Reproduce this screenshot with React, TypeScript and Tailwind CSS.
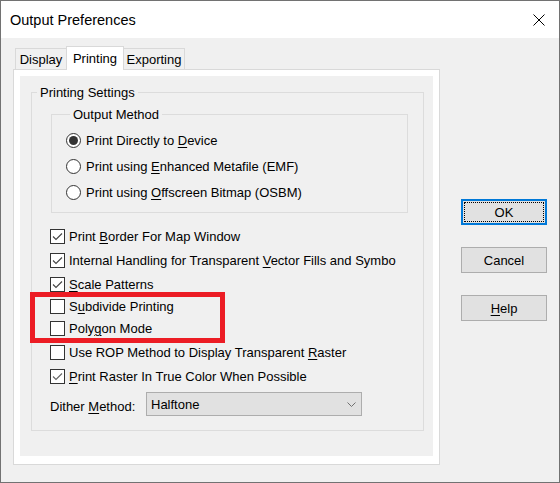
import React from "react";

const U = ({ children }: { children: React.ReactNode }) => (
  <span className="underline decoration-1 underline-offset-[2px]">{children}</span>
);

const Radio = ({ checked }: { checked?: boolean }) => (
  <svg width="15" height="15" viewBox="0 0 15 15" className="shrink-0">
    <circle cx="7.5" cy="7.5" r="7" fill="#ffffff" stroke="#333333" strokeWidth="1" />
    {checked && <circle cx="7.5" cy="7.5" r="4.5" fill="#333333" />}
  </svg>
);

const Check = ({ checked, color = "#444444" }: { checked?: boolean; color?: string }) => (
  <svg width="15" height="15" viewBox="0 0 15 15" className="shrink-0">
    <rect x="0.5" y="0.5" width="14" height="14" fill="#ffffff" stroke="#333333" strokeWidth="1" />
    {checked && (
      <polyline points="3,7.5 6,10.5 12,4.5" fill="none" stroke={color} strokeWidth="1.1" />
    )}
  </svg>
);

const RadioRow = ({ checked, children }: { checked?: boolean; children: React.ReactNode }) => (
  <div className="h-[26px] flex items-center gap-[5px] whitespace-nowrap">
    <Radio checked={checked} />
    <span>{children}</span>
  </div>
);

const CheckRow = ({
  checked,
  children,
  mt,
  color,
}: {
  checked?: boolean;
  children: React.ReactNode;
  mt: string;
  color?: string;
}) => (
  <div className={`h-[15px] flex items-center gap-[4px] whitespace-nowrap ${mt}`}>
    <Check checked={checked} color={color} />
    <span>{children}</span>
  </div>
);

export default function App() {
  return (
    <div className="relative w-[560px] h-[483px] border border-[#727272] bg-[#f0f0f0] flex flex-col overflow-hidden text-black text-[13px] leading-[15px] font-['Liberation_Sans',Arial,sans-serif]">
      {/* Title bar */}
      <div className="h-[37px] shrink-0 bg-white flex items-center justify-between pl-[9px] pr-[14px]">
        <span className="text-[14.5px] leading-[18px]">Output Preferences</span>
        <svg width="12" height="12" viewBox="0 0 12 12">
          <line x1="0.5" y1="0.5" x2="11.5" y2="11.5" stroke="#000" strokeWidth="1" />
          <line x1="11.5" y1="0.5" x2="0.5" y2="11.5" stroke="#000" strokeWidth="1" />
        </svg>
      </div>

      {/* Body */}
      <div className="flex-1 flex pl-[12px] pt-[8px]">
        <div className="w-[427px] flex flex-col">
          {/* Tabs */}
          <div className="h-[23px] flex items-end pl-[2px]">
            <div className="w-[51px] h-[21px] border-l border-t border-[#d9d9d9] flex items-center justify-center">
              Display
            </div>
            <div className="relative z-10 -mb-px w-[58px] h-[24px] pb-px border-l border-t border-r border-[#d9d9d9] bg-white flex items-center justify-center">
              Printing
            </div>
            <div className="w-[61px] h-[21px] border-t border-r border-[#d9d9d9] flex items-center justify-center">
              Exporting
            </div>
          </div>

          {/* Panel */}
          <div className="h-[396px] border border-[#d9d9d9] bg-white p-[6px]">
            <div className="h-[380px] bg-[#f0f0f0] pl-[11px] pt-[9px]">
              <fieldset className="w-[393px] border border-[#dcdcdc] pb-[14px]">
                <legend className="ml-[5px] px-[3px] leading-[15px]">Printing Settings</legend>

                <fieldset className="ml-[19px] mt-[7px] w-[357px] border border-[#dcdcdc] pl-[14px] pt-[5px] pb-[7px]">
                  <legend className="ml-[4px] px-[3px] leading-[15px]">Output Method</legend>
                  <RadioRow checked>
                    Print Directly to <U>D</U>evice
                  </RadioRow>
                  <RadioRow>
                    Print using <U>E</U>nhanced Metafile (EMF)
                  </RadioRow>
                  <RadioRow>
                    Print using <U>O</U>ffscreen Bitmap (OSBM)
                  </RadioRow>
                </fieldset>

                <div className="pl-[18px] flex flex-col">
                  <CheckRow checked mt="mt-[16px]">
                    Print <U>B</U>order For Map Window
                  </CheckRow>
                  <CheckRow checked mt="mt-[9px]">
                    Internal Handling for Transparent <U>V</U>ector Fills and Symbo
                  </CheckRow>
                  <CheckRow checked mt="mt-[9px]">
                    <U>S</U>cale Patterns
                  </CheckRow>
                  <CheckRow mt="mt-[7px]">
                    S<U>u</U>bdivide Printing
                  </CheckRow>
                  <CheckRow mt="mt-[7px]">
                    Poly<U>g</U>on Mode
                  </CheckRow>
                  <CheckRow mt="mt-[9px]">
                    Use ROP Method to Display Transparent <U>R</U>aster
                  </CheckRow>
                  <CheckRow checked mt="mt-[9px]" color="#666666">
                    <U>P</U>rint Raster In True Color When Possible
                  </CheckRow>

                  <div className="mt-[8px] flex items-center">
                    <span className="w-[96px] shrink-0 pt-[4px] whitespace-nowrap">
                      Dither <U>M</U>ethod:
                    </span>
                    <div className="w-[216px] h-[24px] border border-[#adadad] bg-[#e1e1e1] flex items-center justify-between pl-[4px] pr-[5px]">
                      <span>Halftone</span>
                      <svg width="9" height="5" viewBox="0 0 9 5">
                        <polyline points="0.5,0.5 4.5,4.5 8.5,0.5" fill="none" stroke="#707070" strokeWidth="1" />
                      </svg>
                    </div>
                  </div>
                </div>
              </fieldset>
            </div>
          </div>
        </div>

        {/* Buttons */}
        <div className="ml-[21px] pt-[153px] flex flex-col gap-[22px]">
          <div className="relative w-[86px] h-[26px] border-2 border-[#0078d7] bg-[#e1e1e1] flex items-center justify-center">
            <div className="absolute inset-[1px] border border-dotted border-black" />
            OK
          </div>
          <div className="w-[86px] h-[26px] border border-[#adadad] bg-[#e1e1e1] flex items-center justify-center">
            Cancel
          </div>
          <div className="w-[86px] h-[26px] border border-[#adadad] bg-[#e1e1e1] flex items-center justify-center">
            <span>
              <U>H</U>elp
            </span>
          </div>
        </div>
      </div>

      {/* Red highlight overlay */}
      <div className="absolute left-[29px] top-[291px] w-[195px] h-[51px] border-[5px] border-[#ec1c24] pointer-events-none" />
    </div>
  );
}
